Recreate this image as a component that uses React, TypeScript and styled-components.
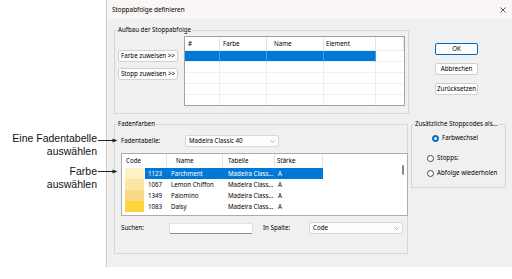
import React from "react";
import styled, { createGlobalStyle } from "styled-components";

const Global = createGlobalStyle`
  html, body { margin: 0; padding: 0; background: #fff; }
  body { width: 512px; height: 279px; overflow: hidden; }
  *, *::before, *::after { box-sizing: border-box; }
`;

const UI_FONT = `"Noto Sans", "DejaVu Sans", sans-serif`;
const SEL = "#0078d7";

const Page = styled.div`
  display: flex;
  align-items: flex-start;
  width: 512px;
  height: 279px;
  background: #fff;
`;

const Annotations = styled.div`
  position: relative;
  z-index: 1;
  flex: none;
  width: 106px;
  padding-top: 132px;
  display: flex;
  flex-direction: column;
  gap: 8px;
`;

const Callout = styled.div`
  display: flex;
  align-items: flex-start;
  width: 118px;
`;

const CalloutText = styled.div`
  width: 98px;
  padding-right: 1px;
  text-align: right;
  font: 10.5px/12.5px "Liberation Sans", Arial, sans-serif;
  color: #111;
  white-space: nowrap;
`;

const Arrow = styled.svg<{ $top: number }>`
  flex: none;
  display: block;
  margin-top: ${(p) => p.$top}px;
`;

const Dialog = styled.div`
  flex: 1;
  height: 267px;
  display: flex;
  flex-direction: column;
  border-left: 1px solid #c9c9c9;
  background: #f0f0f0;
  font-family: ${UI_FONT};
  font-size: 6.2px;
  color: #000;
`;

const TitleBar = styled.div`
  flex: none;
  height: 19px;
  display: flex;
  align-items: center;
  justify-content: space-between;
  padding: 0 6px 0 5px;
  background: #faf6f5;
`;

const Title = styled.span`
  font-size: 6.4px;
  line-height: 8px;
`;

const Body = styled.div`
  flex: 1;
  padding: 7px 0 0 7px;
  display: flex;
  flex-direction: column;
  gap: 6px;
`;

const Row = styled.div<{ $gap?: number }>`
  display: flex;
  align-items: flex-start;
  gap: ${(p) => p.$gap ?? 0}px;
`;

const Group = styled.fieldset<{ $w: number; $h: number }>`
  margin: 0;
  padding: 0;
  width: ${(p) => p.$w}px;
  height: ${(p) => p.$h}px;
  min-inline-size: 0;
  border: 1px solid #d6d6d6;
  flex: none;
`;

const Legend = styled.legend`
  margin-left: 2px;
  padding: 0 1px;
  font-size: 6.2px;
  line-height: 8px;
  white-space: nowrap;
`;

const GroupInner = styled.div<{ $pad: string; $dir?: string }>`
  display: flex;
  flex-direction: ${(p) => p.$dir ?? "column"};
  align-items: flex-start;
  padding: ${(p) => p.$pad};
`;

const ButtonStack = styled.div<{ $top: number; $gap: number }>`
  display: flex;
  flex-direction: column;
  gap: ${(p) => p.$gap}px;
  margin-top: ${(p) => p.$top}px;
  flex: none;
`;

const Button = styled.button<{ $w: number; $default?: boolean }>`
  width: ${(p) => p.$w}px;
  height: 12px;
  padding: 0;
  border: 1px solid ${(p) => (p.$default ? "#0067c0" : "#d0d0d0")};
  border-radius: 2px;
  background: #fdfdfd;
  font-family: ${UI_FONT};
  font-size: 6.2px;
  line-height: 10px;
  color: #000;
  text-align: center;
  white-space: nowrap;
`;

/* ---------- stop sequence table ---------- */
const SeqTable = styled.div`
  margin-left: 6px;
  width: 221px;
  height: 70px;
  border: 1px solid #a3a3a3;
  background: #fff;
  overflow: hidden;
  display: grid;
  grid-template-columns: 35px 47px 57px 52px 1fr;
  grid-auto-rows: 11px;
  grid-template-rows: 14px;
`;

const SeqHead = styled.div<{ $pad?: number }>`
  border-right: 1px solid #e3e3e3;
  border-bottom: 1px solid #ececec;
  padding-left: ${(p) => p.$pad ?? 3}px;
  line-height: 13px;
  &:last-child { border-right: none; }
`;

const SeqCell = styled.div<{ $sel?: boolean; $last?: boolean }>`
  background: ${(p) => (p.$sel ? SEL : "#fff")};
  border-right: 1px solid
    ${(p) => (p.$last ? "transparent" : p.$sel ? "#4c9be2" : "#efefef")};
  border-bottom: 1px solid #efefef;
`;

/* ---------- thread list ---------- */
const FieldRow = styled.div<{ $top: number; $pad?: number }>`
  display: flex;
  align-items: center;
  margin-top: ${(p) => p.$top}px;
  padding-left: ${(p) => p.$pad ?? 0}px;
`;

const Label = styled.span<{ $w: number }>`
  width: ${(p) => p.$w}px;
  flex: none;
  line-height: 8px;
  white-space: nowrap;
`;

const Combo = styled.div<{ $w: number }>`
  width: ${(p) => p.$w}px;
  height: 12px;
  display: flex;
  align-items: center;
  justify-content: space-between;
  padding: 0 3px 0 3px;
  background: #fdfdfd;
  border: 1px solid #d9d9d9;
  border-radius: 2px;
  line-height: 8px;
  white-space: nowrap;
`;

const TextInput = styled.div<{ $w: number }>`
  width: ${(p) => p.$w}px;
  height: 11px;
  background: #fff;
  border: 1px solid #e2e2e2;
  border-bottom-color: #8d8d8d;
  border-radius: 2px;
`;

const List = styled.div`
  margin-top: 6px;
  margin-left: 3px;
  width: 287px;
  height: 63px;
  border: 1px solid #adadad;
  background: #fff;
  display: flex;
  overflow: hidden;
`;

const ListBody = styled.div`
  flex: 1;
  display: flex;
  flex-direction: column;
`;

const ListHeader = styled.div`
  display: flex;
  height: 13px;
  margin-bottom: 1px;
`;

const HeadCell = styled.div<{ $w: number; $pad: number }>`
  width: ${(p) => p.$w}px;
  flex: none;
  padding-left: ${(p) => p.$pad}px;
  border-right: 1px solid #e3e3e3;
  line-height: 13px;
  white-space: nowrap;
`;

const ListRow = styled.div`
  display: flex;
  height: 11px;
`;

const Swatch = styled.div<{ $c: string }>`
  flex: none;
  width: 19px;
  height: 11px;
  margin-left: 3px;
  margin-right: 1px;
  background: ${(p) => p.$c};
`;

const Selection = styled.div<{ $sel?: boolean }>`
  display: flex;
  width: 178px;
  background: ${(p) => (p.$sel ? SEL : "transparent")};
  color: ${(p) => (p.$sel ? "#fff" : "#000")};
`;

const Cell = styled.div<{ $w: number; $pad: number }>`
  width: ${(p) => p.$w}px;
  flex: none;
  padding-left: ${(p) => p.$pad}px;
  line-height: 11px;
  white-space: nowrap;
  overflow: hidden;
`;

const ScrollTrack = styled.div`
  flex: none;
  width: 9px;
  padding-top: 11px;
  display: flex;
  justify-content: center;
`;

const ScrollThumb = styled.div`
  width: 2px;
  height: 10px;
  border-radius: 1px;
  background: #8a8a8a;
`;

/* ---------- radio group ---------- */
const RadioRow = styled.label<{ $top: number; $indent: number }>`
  display: flex;
  align-items: center;
  gap: 3px;
  margin-top: ${(p) => p.$top}px;
  margin-left: ${(p) => p.$indent}px;
  line-height: 8px;
  white-space: nowrap;
`;

const RadioDot = styled.span<{ $on?: boolean }>`
  flex: none;
  width: 7px;
  height: 7px;
  border-radius: 50%;
  background: ${(p) => (p.$on ? "#0067c0" : "#fff")};
  border: 1px solid ${(p) => (p.$on ? "#0067c0" : "#4a4a4a")};
  display: flex;
  align-items: center;
  justify-content: center;
  &::after {
    content: "";
    width: 3px;
    height: 3px;
    border-radius: 50%;
    background: ${(p) => (p.$on ? "#fff" : "transparent")};
  }
`;

const Chevron = () => (
  <svg width="5" height="3" viewBox="0 0 5 3">
    <path d="M0.4 0.4 L2.5 2.5 L4.6 0.4" fill="none" stroke="#777" strokeWidth="0.6" />
  </svg>
);

const CloseIcon = () => (
  <svg width="6" height="6" viewBox="0 0 6 6">
    <path d="M0.4 0.4 L5.6 5.6 M5.6 0.4 L0.4 5.6" stroke="#222" strokeWidth="0.7" />
  </svg>
);

const CalloutArrow = ({ top }: { top: number }) => (
  <Arrow $top={top} width="20" height="5" viewBox="0 0 20 5">
    <line x1="0" y1="2.5" x2="16" y2="2.5" stroke="#222" strokeWidth="1" />
    <polygon points="14.5,0.6 19.5,2.5 14.5,4.4" fill="#222" />
  </Arrow>
);

const threads = [
  { code: "1123", name: "Parchment", table: "Madeira Class...", w: "A", color: "#fdf2c4", sel: true },
  { code: "1067", name: "Lemon Chiffon", table: "Madeira Class...", w: "A", color: "#fbe6a2" },
  { code: "1349", name: "Palomino", table: "Madeira Class...", w: "A", color: "#f7da85" },
  { code: "1083", name: "Daisy", table: "Madeira Class...", w: "A", color: "#fed43c" },
];

const seqCols = [
  { t: "#", pad: 3 },
  { t: "Farbe", pad: 3 },
  { t: "Name", pad: 7 },
  { t: "Element", pad: 2 },
  { t: "", pad: 0 },
];

export default function App() {
  return (
    <>
      <Global />
      <Page>
        <Annotations>
          <Callout>
            <CalloutText>
              Eine Fadentabelle
              <br />
              auswählen
            </CalloutText>
            <CalloutArrow top={5.5} />
          </Callout>
          <Callout>
            <CalloutText>
              Farbe
              <br />
              auswählen
            </CalloutText>
            <CalloutArrow top={4} />
          </Callout>
        </Annotations>

        <Dialog>
          <TitleBar>
            <Title>Stoppabfolge definieren</Title>
            <CloseIcon />
          </TitleBar>
          <Body>
            <Row>
              <Group $w={295} $h={88}>
                <Legend>Aufbau der Stoppabfolge</Legend>
                <GroupInner $dir="row" $pad="2px 2px 0 3px">
                  <ButtonStack $top={14} $gap={6}>
                    <Button $w={60}>Farbe zuweisen &gt;&gt;</Button>
                    <Button $w={60}>Stopp zuweisen &gt;&gt;</Button>
                  </ButtonStack>
                  <SeqTable>
                    {seqCols.map((c, i) => (
                      <SeqHead key={"h" + i} $pad={c.pad}>
                        {c.t}
                      </SeqHead>
                    ))}
                    {[0, 1, 2, 3, 4].map((r) =>
                      seqCols.map((_, i) => (
                        <SeqCell key={r + "-" + i} $sel={r === 0 && i < 4} $last={i === 4} />
                      ))
                    )}
                  </SeqTable>
                </GroupInner>
              </Group>
              <ButtonStack $top={17} $gap={8} style={{ marginLeft: 26 }}>
                <Button $w={43} $default>
                  OK
                </Button>
                <Button $w={43}>Abbrechen</Button>
                <Button $w={43}>Zurücksetzen</Button>
              </ButtonStack>
            </Row>

            <Row $gap={3}>
              <Group $w={294} $h={134}>
                <Legend>Fadenfarben</Legend>
                <GroupInner $pad="0 2px 0 3px">
                  <FieldRow $top={7} $pad={3}>
                    <Label $w={64}>Fadentabelle:</Label>
                    <Combo $w={94}>
                      <span>Madeira Classic 40</span>
                      <Chevron />
                    </Combo>
                  </FieldRow>
                  <List>
                    <ListBody>
                      <ListHeader>
                        <HeadCell $w={45} $pad={4}>Code</HeadCell>
                        <HeadCell $w={56} $pad={9}>Name</HeadCell>
                        <HeadCell $w={52} $pad={5}>Tabelle</HeadCell>
                        <HeadCell $w={48} $pad={2}>Stärke</HeadCell>
                      </ListHeader>
                      {threads.map((t) => (
                        <ListRow key={t.code}>
                          <Swatch $c={t.color} />
                          <Selection $sel={t.sel}>
                            <Cell $w={22} $pad={3}>{t.code}</Cell>
                            <Cell $w={56} $pad={4}>{t.name}</Cell>
                            <Cell $w={52} $pad={5}>{t.table}</Cell>
                            <Cell $w={48} $pad={3}>{t.w}</Cell>
                          </Selection>
                        </ListRow>
                      ))}
                    </ListBody>
                    <ScrollTrack>
                      <ScrollThumb />
                    </ScrollTrack>
                  </List>
                  <FieldRow $top={6} $pad={3}>
                    <Label $w={48}>Suchen:</Label>
                    <TextInput $w={84} />
                    <Label $w={46} style={{ marginLeft: 10 }}>
                      In Spalte:
                    </Label>
                    <Combo $w={94}>
                      <span>Code</span>
                      <Chevron />
                    </Combo>
                  </FieldRow>
                </GroupInner>
              </Group>
              <Group $w={95} $h={68}>
                <Legend>Zusätzliche Stoppcodes als...</Legend>
                <GroupInner $pad="0">
                  <RadioRow $top={6} $indent={20}>
                    <RadioDot $on />
                    Farbwechsel
                  </RadioRow>
                  <RadioRow $top={12} $indent={15}>
                    <RadioDot />
                    Stopps:
                  </RadioRow>
                  <RadioRow $top={7} $indent={15}>
                    <RadioDot />
                    Abfolge wiederholen
                  </RadioRow>
                </GroupInner>
              </Group>
            </Row>
          </Body>
        </Dialog>
      </Page>
    </>
  );
}
